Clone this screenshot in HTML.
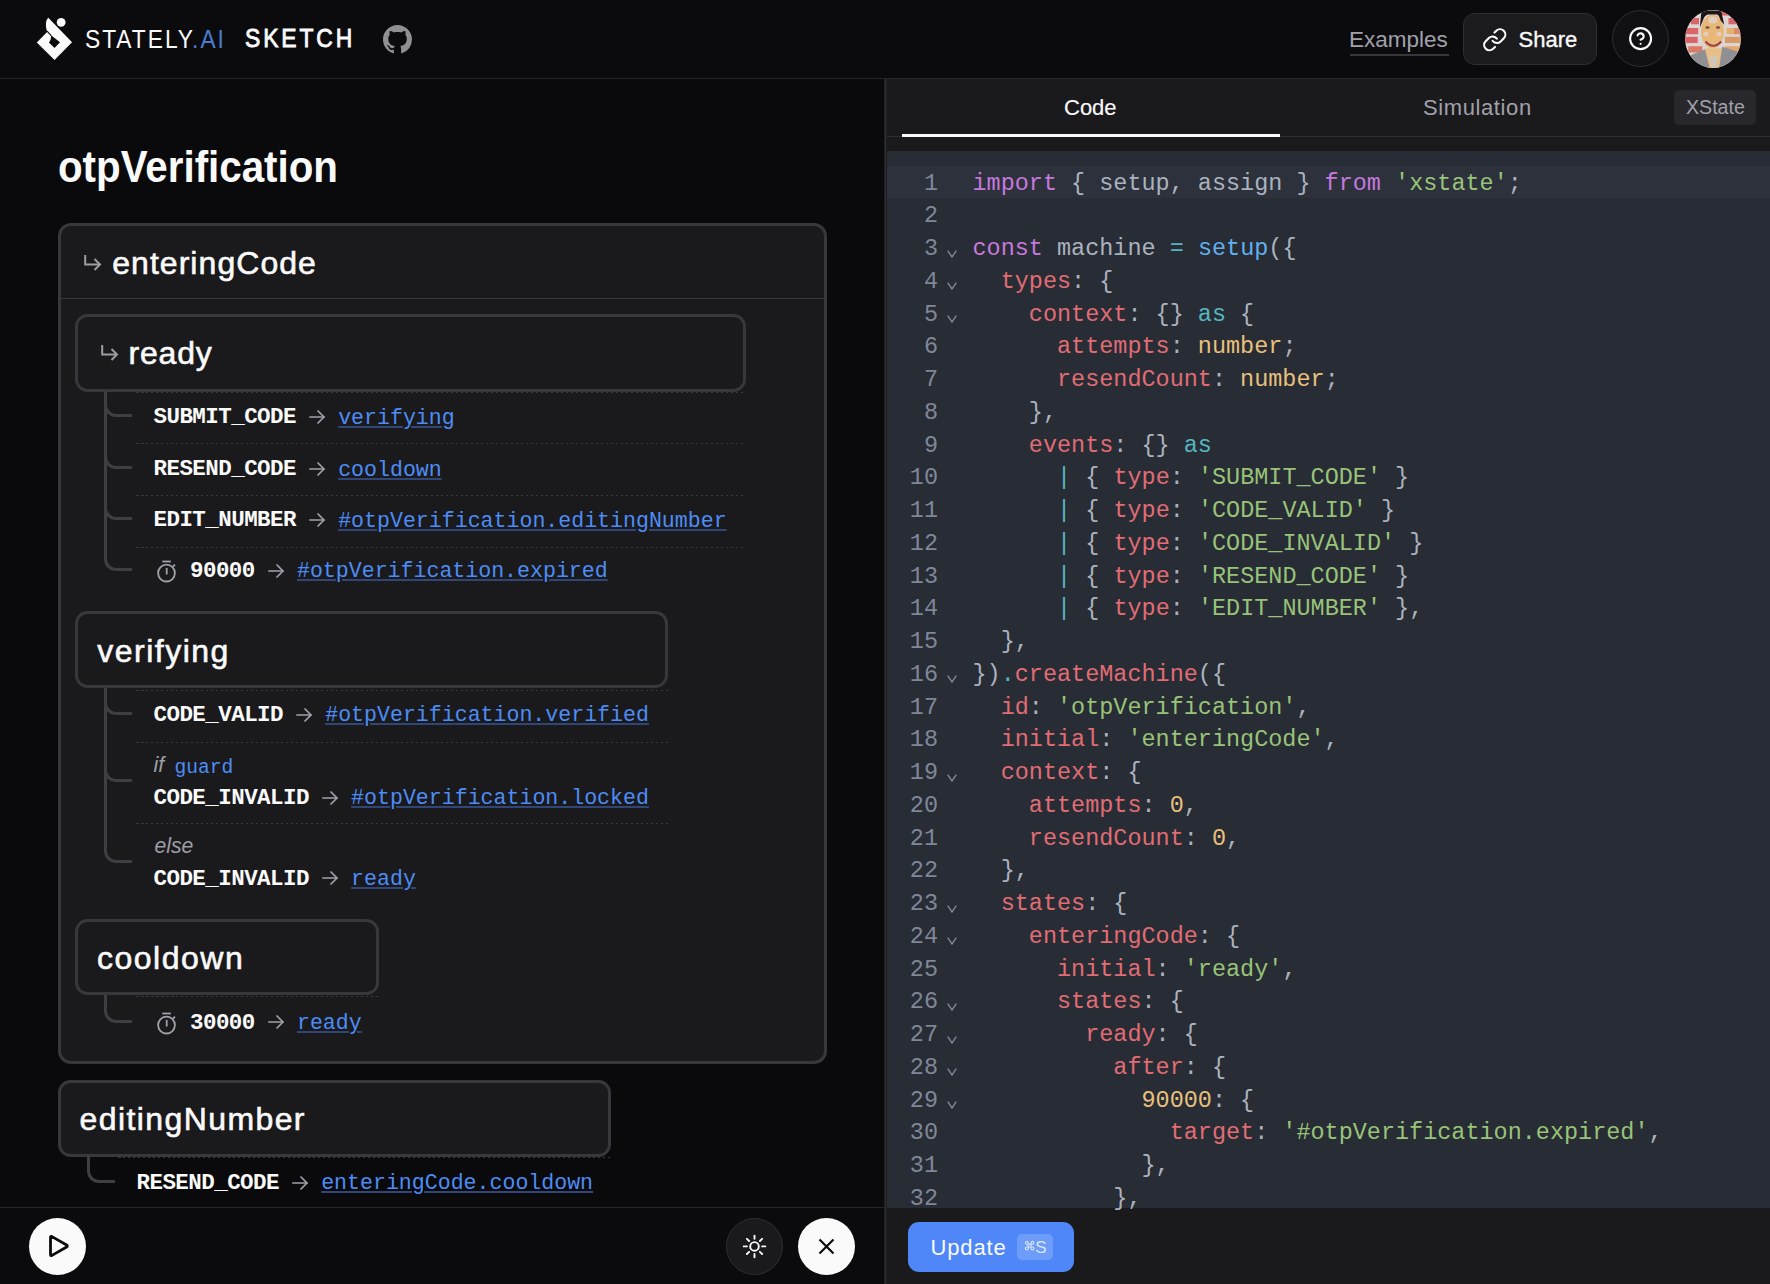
<!DOCTYPE html>
<html><head><meta charset="utf-8">
<style>
*{box-sizing:border-box;margin:0;padding:0}
html,body{width:1770px;height:1284px;overflow:hidden;background:#0b0b0d;font-family:"Liberation Sans",sans-serif;color:#fafafa}
.abs{position:absolute}
.sans{font-family:"Liberation Sans",sans-serif;white-space:nowrap}
.mono{font-family:"Liberation Mono",monospace;white-space:nowrap}
#header{position:absolute;left:0;top:0;width:1770px;height:79px;background:#0b0b0d;border-bottom:1px solid #26262a}
#left{position:absolute;left:0;top:79px;width:884px;height:1129px;background:#0a0a0c;overflow:hidden}
#bottombar{position:absolute;left:0;top:1207px;width:884px;height:77px;background:#0b0b0d;border-top:1px solid #26262a}
#divider{position:absolute;left:884px;top:79px;width:3px;height:1205px;background:#1f1f22}
#divider::after{content:"";position:absolute;left:1px;top:0;width:1px;height:100%;background:#2e2e32}
#right{position:absolute;left:887px;top:79px;width:883px;height:1205px;background:#1a1a1d}
/* code */
#code{position:absolute;left:887px;top:151px;width:883px;height:1057px;background:#282c34;overflow:hidden}
.ln{position:absolute;left:888px;width:50px;text-align:right;font-family:"Liberation Mono",monospace;font-size:23.47px;line-height:32.75px;color:#7f8798}
.cl{position:absolute;left:972.5px;white-space:pre;font-family:"Liberation Mono",monospace;font-size:23.47px;line-height:32.75px;color:#abb2bf}
.fold{position:absolute;left:947px;width:10px;height:8px}
.k{color:#c678dd}.f{color:#61afef}.o{color:#56b6c2}.r{color:#e06c75}.y{color:#e9c07d}.s{color:#98c379}.n{color:#e9c07d}
</style></head><body>
<div id="header">
<svg class="abs" style="left:0;top:0" width="100" height="78" viewBox="0 0 100 78">
<path fill="#fafafa" fill-rule="evenodd" d="M48.3 17.84 L72.06 42.37 L54.53 59.9 L36.81 42.57 L47.33 31.67 C46.36 29.52 45.77 26.8 45.97 23.68 C46.04 20.96 46.74 19.4 48.3 17.84 Z M51.03 35.36 L59.98 42.37 L54.53 48.02 L48.89 42.57 C50.25 41.01 51.22 39.26 51.03 35.36 Z"/><path d="M47 31.2 L51.2 35.6" stroke="#0b0b0d" stroke-width="1.1"/>
<circle cx="61.15" cy="22.3" r="4.4" fill="#fafafa"/>
</svg>
<div class="abs" id="brand" style="left:85px;top:24px;font-size:25.3px;letter-spacing:2.2px;transform:scaleX(0.9);transform-origin:0 0;color:#fafafa;white-space:nowrap;line-height:30px">STATELY<span style="color:#4a7bd3">.AI</span></div>
<div class="abs" id="sketch" style="left:245px;top:22px;font-size:26.6px;-webkit-text-stroke:0.9px #fafafa;letter-spacing:3.35px;transform:scaleX(0.86);transform-origin:0 0;color:#fafafa;white-space:nowrap;line-height:32px">SKETCH</div>
<svg class="abs" style="left:383px;top:24.5px" width="29" height="29" viewBox="0 0 16 16"><path fill="#8e8e93" d="M8 0C3.58 0 0 3.58 0 8c0 3.54 2.29 6.53 5.47 7.59.4.07.55-.17.55-.38 0-.19-.01-.82-.01-1.49-2.01.37-2.53-.49-2.69-.94-.09-.23-.48-.94-.82-1.13-.28-.15-.68-.52-.01-.53.63-.01 1.08.58 1.23.82.72 1.21 1.87.87 2.33.66.07-.52.28-.87.51-1.07-1.78-.2-3.64-.89-3.64-3.95 0-.87.31-1.59.82-2.15-.08-.2-.36-1.02.08-2.12 0 0 .67-.21 2.2.82.64-.18 1.32-.27 2-.27.68 0 1.36.09 2 .27 1.53-1.04 2.2-.82 2.2-.82.44 1.1.16 1.92.08 2.12.51.56.82 1.27.82 2.15 0 3.07-1.87 3.75-3.65 3.95.29.25.54.73.54 1.48 0 1.07-.01 1.93-.01 2.2 0 .21.15.46.55.38A8.013 8.013 0 0016 8c0-4.42-3.58-8-8-8z"/></svg>
<div class="abs" id="examples" style="left:1349px;top:27.3px;font-size:22.5px;color:#a1a1aa;white-space:nowrap;line-height:26px">Examples</div>
<div class="abs" style="left:1349.5px;top:54px;width:99px;height:2px;background:#36363b"></div>
<div class="abs" style="left:1463px;top:13px;width:134px;height:52px;border:1px solid #2e2e33;border-radius:12px;background:#1b1b1e"></div>
<svg class="abs" style="left:1482px;top:26.5px" width="25.5" height="25.5" viewBox="0 0 24 24" fill="none" stroke="#fafafa" stroke-width="2" stroke-linecap="round" stroke-linejoin="round"><path d="M10 13a5 5 0 0 0 7.54.54l3-3a5 5 0 0 0-7.07-7.07l-1.72 1.71"/><path d="M14 11a5 5 0 0 0-7.54-.54l-3 3a5 5 0 0 0 7.07 7.07l1.71-1.71"/></svg>
<div class="abs" id="share" style="left:1518.5px;top:27.3px;font-size:22px;-webkit-text-stroke:0.35px #fafafa;color:#fafafa;white-space:nowrap;line-height:26px">Share</div>
<div class="abs" style="left:1612px;top:10px;width:57px;height:57px;border:1px solid #2e2e33;border-radius:50%;background:#111114"></div>
<svg class="abs" style="left:1627.6px;top:26.4px" width="25.2" height="25.2" viewBox="0 0 24 24" fill="none" stroke="#fafafa" stroke-width="2" stroke-linecap="round" stroke-linejoin="round"><circle cx="12" cy="12" r="10"/><path d="M9.09 9a3 3 0 0 1 5.83 1c0 2-3 3-3 3"/><path d="M12 17h.01"/></svg>
<svg class="abs" style="left:1684.5px;top:10px" width="56" height="58" viewBox="0 0 56 58"><defs><clipPath id="avc"><ellipse cx="28" cy="29" rx="27.9" ry="29"/></clipPath></defs><g clip-path="url(#avc)">
<rect width="56" height="58" fill="#ddd5d2"/>
<rect x="36" y="0" width="12" height="5.5" fill="#d9646a"/>
<rect x="6" y="8" width="8" height="6.3" fill="#d9646a"/><rect x="43.5" y="8" width="9" height="6.3" fill="#d9646a"/>
<rect x="0" y="18" width="13.2" height="6.2" fill="#d9646a"/><rect x="41.4" y="18" width="14.6" height="6.2" fill="#e3b06e"/><rect x="49" y="18" width="7" height="6.2" fill="#d98a6a"/>
<rect x="0" y="26.8" width="12.7" height="6.2" fill="#d9646a"/><rect x="39.8" y="26.8" width="16.2" height="6.2" fill="#d99a6a"/>
<rect x="3.3" y="36.2" width="14.1" height="6.3" fill="#dc7a6a"/><rect x="39.8" y="36.2" width="16.2" height="6.3" fill="#e3a86e"/>
<ellipse cx="27.5" cy="21.5" rx="11.5" ry="16.8" fill="#e8b878"/>
<ellipse cx="27.8" cy="10" rx="4.5" ry="3.5" fill="#e2cdbf"/>
<ellipse cx="22.5" cy="17.5" rx="2.2" ry="1.2" fill="#7a4a52"/><ellipse cx="33" cy="17.5" rx="2.2" ry="1.2" fill="#7a4a52"/><ellipse cx="21" cy="24" rx="2.6" ry="2.2" fill="#e2cdbf"/><ellipse cx="34" cy="24" rx="2.6" ry="2.2" fill="#e2cdbf"/>
<path d="M14.8 17.4 L16.4 1.8 Q26 -0.5 36.2 1.3 L39.3 14.8 L35.7 10.6 Q34 5 32 4.4 L22.6 4.4 Q19 6 17.9 10.6 Z" fill="#1d1618"/>
<path d="M20.5 31.5 Q28.4 40 36.2 31.5" stroke="#9e3f48" stroke-width="2" fill="none"/>
<path d="M20 38.3 L37.2 38.3 L35.1 58.1 L22.6 58.1 Z" fill="#e6be86"/>
<path d="M5.9 45 L20 39.3 L24.7 58.1 L0 58.1 Z" fill="#8f8f94"/>
<path d="M37.2 36.7 L53.9 42 L56 58.1 L34.1 58.1 Z" fill="#8f8f94"/>
<path d="M24 46 L27 58 L31 58 L33 46 Z" fill="#c9c9cf" opacity="0.7"/>
</g></svg>
</div>
<div id="left"></div>
<div class="abs" style="left:58px;top:223px;width:769px;height:841px;border:3px solid #38383c;border-radius:13px;background:#1a1a1d"></div>
<div class="abs" style="left:61px;top:298px;width:763px;height:1px;background:#38383c"></div>
<svg class="abs" style="left:84px;top:255px" width="18" height="16" viewBox="0 0 18 16" fill="none" stroke="#9d9da4" stroke-width="2"><path d="M1.2 0 V9.5 H16"/><path d="M10.5 4 L16 9.5 L10.5 15"/></svg>
<div class="abs sans" style="left:112.2px;top:242.71px;font-size:32px;line-height:40.0px;letter-spacing:1.05px;color:#fafafa;-webkit-text-stroke:0.6px #fafafa;">enteringCode</div>
<div class="abs" style="left:75px;top:314px;width:671px;height:78px;border:3px solid #38383c;border-radius:12.5px;background:#1a1a1d"></div>
<svg class="abs" style="left:101px;top:345px" width="18" height="16" viewBox="0 0 18 16" fill="none" stroke="#9d9da4" stroke-width="2"><path d="M1.2 0 V9.5 H16"/><path d="M10.5 4 L16 9.5 L10.5 15"/></svg>
<div class="abs sans" style="left:128.5px;top:332.91px;font-size:32px;line-height:40.0px;letter-spacing:0.8px;color:#fafafa;-webkit-text-stroke:0.6px #fafafa;">ready</div>
<div class="abs" style="left:136px;top:392px;width:610px;height:1px;background-image:repeating-linear-gradient(90deg,#3a3a3e 0 2.5px,transparent 2.5px 5px)"></div>
<div class="abs" style="left:136px;top:443.2px;width:610px;height:1px;background-image:repeating-linear-gradient(90deg,#3a3a3e 0 2.5px,transparent 2.5px 5px)"></div>
<div class="abs" style="left:136px;top:494.6px;width:610px;height:1px;background-image:repeating-linear-gradient(90deg,#3a3a3e 0 2.5px,transparent 2.5px 5px)"></div>
<div class="abs" style="left:136px;top:546.6px;width:610px;height:1px;background-image:repeating-linear-gradient(90deg,#3a3a3e 0 2.5px,transparent 2.5px 5px)"></div>
<div class="abs" style="left:103.5px;top:392px;width:3px;height:148px;background:#3e3e43"></div>
<div class="abs" style="left:103.5px;top:390.5px;width:28.5px;height:26.5px;border-left:3px solid #3e3e43;border-bottom:3px solid #3e3e43;border-bottom-left-radius:12px"></div>
<div class="abs mono" style="left:153.5px;top:402.30px;font-size:22.5px;line-height:30px;color:#fafafa;font-weight:bold;letter-spacing:-0.552px;">SUBMIT_CODE</div>
<svg class="abs" style="left:309.35px;top:409.8px" width="16" height="14" viewBox="0 0 16 14" fill="none" stroke="#a1a1aa" stroke-width="1.7" stroke-linecap="round" stroke-linejoin="round"><path d="M0.9 7 H15"/><path d="M9 1 L15 7 L9 13"/></svg>
<div class="abs mono" style="left:338.15000000000003px;top:402.55px;font-size:21.58px;line-height:30px;color:#4d8cf5;text-decoration:underline;text-decoration-color:#2f4677;text-underline-offset:2px;text-decoration-thickness:2px;">verifying</div>
<div class="abs" style="left:103.5px;top:442.5px;width:28.5px;height:26.5px;border-left:3px solid #3e3e43;border-bottom:3px solid #3e3e43;border-bottom-left-radius:12px"></div>
<div class="abs mono" style="left:153.5px;top:454.30px;font-size:22.5px;line-height:30px;color:#fafafa;font-weight:bold;letter-spacing:-0.552px;">RESEND_CODE</div>
<svg class="abs" style="left:309.35px;top:461.8px" width="16" height="14" viewBox="0 0 16 14" fill="none" stroke="#a1a1aa" stroke-width="1.7" stroke-linecap="round" stroke-linejoin="round"><path d="M0.9 7 H15"/><path d="M9 1 L15 7 L9 13"/></svg>
<div class="abs mono" style="left:338.15000000000003px;top:454.55px;font-size:21.58px;line-height:30px;color:#4d8cf5;text-decoration:underline;text-decoration-color:#2f4677;text-underline-offset:2px;text-decoration-thickness:2px;">cooldown</div>
<div class="abs" style="left:103.5px;top:493.5px;width:28.5px;height:26.5px;border-left:3px solid #3e3e43;border-bottom:3px solid #3e3e43;border-bottom-left-radius:12px"></div>
<div class="abs mono" style="left:153.5px;top:505.30px;font-size:22.5px;line-height:30px;color:#fafafa;font-weight:bold;letter-spacing:-0.552px;">EDIT_NUMBER</div>
<svg class="abs" style="left:309.35px;top:512.8px" width="16" height="14" viewBox="0 0 16 14" fill="none" stroke="#a1a1aa" stroke-width="1.7" stroke-linecap="round" stroke-linejoin="round"><path d="M0.9 7 H15"/><path d="M9 1 L15 7 L9 13"/></svg>
<div class="abs mono" style="left:338.15000000000003px;top:505.55px;font-size:21.58px;line-height:30px;color:#4d8cf5;text-decoration:underline;text-decoration-color:#2f4677;text-underline-offset:2px;text-decoration-thickness:2px;">#otpVerification.editingNumber</div>
<div class="abs" style="left:103.5px;top:540px;width:28.5px;height:30.799999999999955px;border-left:3px solid #3e3e43;border-bottom:3px solid #3e3e43;border-bottom-left-radius:12px"></div>
<svg class="abs" style="left:157px;top:560.0px" width="20" height="23" viewBox="157 559.5 20 23" fill="none" stroke="#a1a1aa" stroke-width="1.8" stroke-linecap="butt"><path d="M162.3 561 H170.9"/><circle cx="166.5" cy="572.6" r="8.4"/><path d="M166.7 567.4 V574"/><path d="M173 566 L175 564.3"/></svg>
<div class="abs mono" style="left:190px;top:556.10px;font-size:22.5px;line-height:30px;color:#fafafa;font-weight:bold;letter-spacing:-0.552px;">90000</div>
<svg class="abs" style="left:268.15px;top:563.5999999999999px" width="16" height="14" viewBox="0 0 16 14" fill="none" stroke="#a1a1aa" stroke-width="1.7" stroke-linecap="round" stroke-linejoin="round"><path d="M0.9 7 H15"/><path d="M9 1 L15 7 L9 13"/></svg>
<div class="abs mono" style="left:296.95px;top:556.35px;font-size:21.58px;line-height:30px;color:#4d8cf5;text-decoration:underline;text-decoration-color:#2f4677;text-underline-offset:2px;text-decoration-thickness:2px;">#otpVerification.expired</div>
<div class="abs" style="left:75px;top:611px;width:592.5px;height:77px;border:3px solid #38383c;border-radius:12.5px;background:#1a1a1d"></div>
<div class="abs sans" style="left:97.2px;top:630.71px;font-size:32px;line-height:40.0px;letter-spacing:1.5px;color:#fafafa;-webkit-text-stroke:0.6px #fafafa;">verifying</div>
<div class="abs" style="left:136px;top:689.7px;width:531.5px;height:1px;background-image:repeating-linear-gradient(90deg,#3a3a3e 0 2.5px,transparent 2.5px 5px)"></div>
<div class="abs" style="left:136px;top:741.6px;width:531.5px;height:1px;background-image:repeating-linear-gradient(90deg,#3a3a3e 0 2.5px,transparent 2.5px 5px)"></div>
<div class="abs" style="left:136px;top:822.7px;width:531.5px;height:1px;background-image:repeating-linear-gradient(90deg,#3a3a3e 0 2.5px,transparent 2.5px 5px)"></div>
<div class="abs" style="left:103.5px;top:688px;width:3px;height:152px;background:#3e3e43"></div>
<div class="abs" style="left:103.5px;top:690px;width:28.5px;height:24.700000000000045px;border-left:3px solid #3e3e43;border-bottom:3px solid #3e3e43;border-bottom-left-radius:12px"></div>
<div class="abs mono" style="left:153.5px;top:700.00px;font-size:22.5px;line-height:30px;color:#fafafa;font-weight:bold;letter-spacing:-0.552px;">CODE_VALID</div>
<svg class="abs" style="left:296.4px;top:707.5px" width="16" height="14" viewBox="0 0 16 14" fill="none" stroke="#a1a1aa" stroke-width="1.7" stroke-linecap="round" stroke-linejoin="round"><path d="M0.9 7 H15"/><path d="M9 1 L15 7 L9 13"/></svg>
<div class="abs mono" style="left:325.2px;top:700.25px;font-size:21.58px;line-height:30px;color:#4d8cf5;text-decoration:underline;text-decoration-color:#2f4677;text-underline-offset:2px;text-decoration-thickness:2px;">#otpVerification.verified</div>
<div class="abs" style="left:103.5px;top:745px;width:28.5px;height:37.0px;border-left:3px solid #3e3e43;border-bottom:3px solid #3e3e43;border-bottom-left-radius:12px"></div>
<div class="abs sans" style="left:153.5px;top:752.01px;font-size:21.5px;line-height:26.875px;letter-spacing:0px;color:#9d9da4;font-style:italic;">if</div>
<div class="abs mono" style="left:174.5px;top:752.67px;font-size:19.6px;line-height:30px;color:#4d8cf5;">guard</div>
<div class="abs mono" style="left:153.5px;top:783.00px;font-size:22.5px;line-height:30px;color:#fafafa;font-weight:bold;letter-spacing:-0.552px;">CODE_INVALID</div>
<svg class="abs" style="left:322.29999999999995px;top:790.5px" width="16" height="14" viewBox="0 0 16 14" fill="none" stroke="#a1a1aa" stroke-width="1.7" stroke-linecap="round" stroke-linejoin="round"><path d="M0.9 7 H15"/><path d="M9 1 L15 7 L9 13"/></svg>
<div class="abs mono" style="left:351.09999999999997px;top:783.25px;font-size:21.58px;line-height:30px;color:#4d8cf5;text-decoration:underline;text-decoration-color:#2f4677;text-underline-offset:2px;text-decoration-thickness:2px;">#otpVerification.locked</div>
<div class="abs" style="left:103.5px;top:825px;width:28.5px;height:37.799999999999955px;border-left:3px solid #3e3e43;border-bottom:3px solid #3e3e43;border-bottom-left-radius:12px"></div>
<div class="abs sans" style="left:154.5px;top:833.10px;font-size:21.2px;line-height:26.5px;letter-spacing:0px;color:#9d9da4;font-style:italic;">else</div>
<div class="abs mono" style="left:153.5px;top:863.80px;font-size:22.5px;line-height:30px;color:#fafafa;font-weight:bold;letter-spacing:-0.552px;">CODE_INVALID</div>
<svg class="abs" style="left:322.29999999999995px;top:871.3px" width="16" height="14" viewBox="0 0 16 14" fill="none" stroke="#a1a1aa" stroke-width="1.7" stroke-linecap="round" stroke-linejoin="round"><path d="M0.9 7 H15"/><path d="M9 1 L15 7 L9 13"/></svg>
<div class="abs mono" style="left:351.09999999999997px;top:864.05px;font-size:21.58px;line-height:30px;color:#4d8cf5;text-decoration:underline;text-decoration-color:#2f4677;text-underline-offset:2px;text-decoration-thickness:2px;">ready</div>
<div class="abs" style="left:75px;top:919px;width:303.5px;height:76px;border:3px solid #38383c;border-radius:12.5px;background:#1a1a1d"></div>
<div class="abs sans" style="left:97px;top:937.91px;font-size:32px;line-height:40.0px;letter-spacing:1.5px;color:#fafafa;-webkit-text-stroke:0.6px #fafafa;">cooldown</div>
<div class="abs" style="left:136px;top:996.3px;width:242.5px;height:1px;background-image:repeating-linear-gradient(90deg,#3a3a3e 0 2.5px,transparent 2.5px 5px)"></div>
<div class="abs" style="left:103.5px;top:995px;width:28.5px;height:27.5px;border-left:3px solid #3e3e43;border-bottom:3px solid #3e3e43;border-bottom-left-radius:12px"></div>
<svg class="abs" style="left:157px;top:1011.7px" width="20" height="23" viewBox="157 559.5 20 23" fill="none" stroke="#a1a1aa" stroke-width="1.8" stroke-linecap="butt"><path d="M162.3 561 H170.9"/><circle cx="166.5" cy="572.6" r="8.4"/><path d="M166.7 567.4 V574"/><path d="M173 566 L175 564.3"/></svg>
<div class="abs mono" style="left:190px;top:1007.80px;font-size:22.5px;line-height:30px;color:#fafafa;font-weight:bold;letter-spacing:-0.552px;">30000</div>
<svg class="abs" style="left:268.15px;top:1015.3px" width="16" height="14" viewBox="0 0 16 14" fill="none" stroke="#a1a1aa" stroke-width="1.7" stroke-linecap="round" stroke-linejoin="round"><path d="M0.9 7 H15"/><path d="M9 1 L15 7 L9 13"/></svg>
<div class="abs mono" style="left:296.95px;top:1008.05px;font-size:21.58px;line-height:30px;color:#4d8cf5;text-decoration:underline;text-decoration-color:#2f4677;text-underline-offset:2px;text-decoration-thickness:2px;">ready</div>
<div class="abs" style="left:58px;top:1079.5px;width:552.5px;height:77.0px;border:3px solid #38383c;border-radius:12.5px;background:#1a1a1d"></div>
<div class="abs sans" style="left:79.6px;top:1098.51px;font-size:32px;line-height:40.0px;letter-spacing:1.4px;color:#fafafa;-webkit-text-stroke:0.6px #fafafa;">editingNumber</div>
<div class="abs" style="left:118px;top:1157px;width:492.5px;height:1px;background-image:repeating-linear-gradient(90deg,#3a3a3e 0 2.5px,transparent 2.5px 5px)"></div>
<div class="abs" style="left:86.5px;top:1156px;width:28.5px;height:26.90000000000009px;border-left:3px solid #3e3e43;border-bottom:3px solid #3e3e43;border-bottom-left-radius:12px"></div>
<div class="abs mono" style="left:136.5px;top:1168.20px;font-size:22.5px;line-height:30px;color:#fafafa;font-weight:bold;letter-spacing:-0.552px;">RESEND_CODE</div>
<svg class="abs" style="left:292.35px;top:1175.7px" width="16" height="14" viewBox="0 0 16 14" fill="none" stroke="#a1a1aa" stroke-width="1.7" stroke-linecap="round" stroke-linejoin="round"><path d="M0.9 7 H15"/><path d="M9 1 L15 7 L9 13"/></svg>
<div class="abs mono" style="left:321.15000000000003px;top:1168.45px;font-size:21.58px;line-height:30px;color:#4d8cf5;text-decoration:underline;text-decoration-color:#2f4677;text-underline-offset:2px;text-decoration-thickness:2px;">enteringCode.cooldown</div>
<div id="bottombar"></div>
<div id="divider"></div>
<div id="right"></div>
<div id="code"><div class="abs" style="left:0;top:15px;width:883px;height:32px;background:#2c313c"></div></div>
<div class="ln" style="top:167.60px">1</div>
<div class="cl" style="top:167.60px"><span class="k">import</span> { setup, assign } <span class="k">from</span> <span class="s">&#x27;xstate&#x27;</span>;</div>
<div class="ln" style="top:200.35px">2</div>
<div class="cl" style="top:200.35px"></div>
<div class="ln" style="top:233.10px">3</div>
<svg class="fold" style="top:249.50px" viewBox="0 0 10 8"><path d="M0.7 0.7 L5 7 L9.3 0.7" stroke="#7f8798" stroke-width="1.4" fill="none"/></svg>
<div class="cl" style="top:233.10px"><span class="k">const</span> machine <span class="o">=</span> <span class="f">setup</span>({</div>
<div class="ln" style="top:265.85px">4</div>
<svg class="fold" style="top:282.25px" viewBox="0 0 10 8"><path d="M0.7 0.7 L5 7 L9.3 0.7" stroke="#7f8798" stroke-width="1.4" fill="none"/></svg>
<div class="cl" style="top:265.85px">  <span class="r">types</span>: {</div>
<div class="ln" style="top:298.60px">5</div>
<svg class="fold" style="top:315.00px" viewBox="0 0 10 8"><path d="M0.7 0.7 L5 7 L9.3 0.7" stroke="#7f8798" stroke-width="1.4" fill="none"/></svg>
<div class="cl" style="top:298.60px">    <span class="r">context</span>: {} <span class="o">as</span> {</div>
<div class="ln" style="top:331.35px">6</div>
<div class="cl" style="top:331.35px">      <span class="r">attempts</span>: <span class="y">number</span>;</div>
<div class="ln" style="top:364.10px">7</div>
<div class="cl" style="top:364.10px">      <span class="r">resendCount</span>: <span class="y">number</span>;</div>
<div class="ln" style="top:396.85px">8</div>
<div class="cl" style="top:396.85px">    },</div>
<div class="ln" style="top:429.60px">9</div>
<div class="cl" style="top:429.60px">    <span class="r">events</span>: {} <span class="o">as</span></div>
<div class="ln" style="top:462.35px">10</div>
<div class="cl" style="top:462.35px">      <span class="o">|</span> { <span class="r">type</span>: <span class="s">&#x27;SUBMIT_CODE&#x27;</span> }</div>
<div class="ln" style="top:495.10px">11</div>
<div class="cl" style="top:495.10px">      <span class="o">|</span> { <span class="r">type</span>: <span class="s">&#x27;CODE_VALID&#x27;</span> }</div>
<div class="ln" style="top:527.85px">12</div>
<div class="cl" style="top:527.85px">      <span class="o">|</span> { <span class="r">type</span>: <span class="s">&#x27;CODE_INVALID&#x27;</span> }</div>
<div class="ln" style="top:560.60px">13</div>
<div class="cl" style="top:560.60px">      <span class="o">|</span> { <span class="r">type</span>: <span class="s">&#x27;RESEND_CODE&#x27;</span> }</div>
<div class="ln" style="top:593.35px">14</div>
<div class="cl" style="top:593.35px">      <span class="o">|</span> { <span class="r">type</span>: <span class="s">&#x27;EDIT_NUMBER&#x27;</span> },</div>
<div class="ln" style="top:626.10px">15</div>
<div class="cl" style="top:626.10px">  },</div>
<div class="ln" style="top:658.85px">16</div>
<svg class="fold" style="top:675.25px" viewBox="0 0 10 8"><path d="M0.7 0.7 L5 7 L9.3 0.7" stroke="#7f8798" stroke-width="1.4" fill="none"/></svg>
<div class="cl" style="top:658.85px">})<span class="o">.</span><span class="r">createMachine</span>({</div>
<div class="ln" style="top:691.60px">17</div>
<div class="cl" style="top:691.60px">  <span class="r">id</span>: <span class="s">&#x27;otpVerification&#x27;</span>,</div>
<div class="ln" style="top:724.35px">18</div>
<div class="cl" style="top:724.35px">  <span class="r">initial</span>: <span class="s">&#x27;enteringCode&#x27;</span>,</div>
<div class="ln" style="top:757.10px">19</div>
<svg class="fold" style="top:773.50px" viewBox="0 0 10 8"><path d="M0.7 0.7 L5 7 L9.3 0.7" stroke="#7f8798" stroke-width="1.4" fill="none"/></svg>
<div class="cl" style="top:757.10px">  <span class="r">context</span>: {</div>
<div class="ln" style="top:789.85px">20</div>
<div class="cl" style="top:789.85px">    <span class="r">attempts</span>: <span class="n">0</span>,</div>
<div class="ln" style="top:822.60px">21</div>
<div class="cl" style="top:822.60px">    <span class="r">resendCount</span>: <span class="n">0</span>,</div>
<div class="ln" style="top:855.35px">22</div>
<div class="cl" style="top:855.35px">  },</div>
<div class="ln" style="top:888.10px">23</div>
<svg class="fold" style="top:904.50px" viewBox="0 0 10 8"><path d="M0.7 0.7 L5 7 L9.3 0.7" stroke="#7f8798" stroke-width="1.4" fill="none"/></svg>
<div class="cl" style="top:888.10px">  <span class="r">states</span>: {</div>
<div class="ln" style="top:920.85px">24</div>
<svg class="fold" style="top:937.25px" viewBox="0 0 10 8"><path d="M0.7 0.7 L5 7 L9.3 0.7" stroke="#7f8798" stroke-width="1.4" fill="none"/></svg>
<div class="cl" style="top:920.85px">    <span class="r">enteringCode</span>: {</div>
<div class="ln" style="top:953.60px">25</div>
<div class="cl" style="top:953.60px">      <span class="r">initial</span>: <span class="s">&#x27;ready&#x27;</span>,</div>
<div class="ln" style="top:986.35px">26</div>
<svg class="fold" style="top:1002.75px" viewBox="0 0 10 8"><path d="M0.7 0.7 L5 7 L9.3 0.7" stroke="#7f8798" stroke-width="1.4" fill="none"/></svg>
<div class="cl" style="top:986.35px">      <span class="r">states</span>: {</div>
<div class="ln" style="top:1019.10px">27</div>
<svg class="fold" style="top:1035.50px" viewBox="0 0 10 8"><path d="M0.7 0.7 L5 7 L9.3 0.7" stroke="#7f8798" stroke-width="1.4" fill="none"/></svg>
<div class="cl" style="top:1019.10px">        <span class="r">ready</span>: {</div>
<div class="ln" style="top:1051.85px">28</div>
<svg class="fold" style="top:1068.25px" viewBox="0 0 10 8"><path d="M0.7 0.7 L5 7 L9.3 0.7" stroke="#7f8798" stroke-width="1.4" fill="none"/></svg>
<div class="cl" style="top:1051.85px">          <span class="r">after</span>: {</div>
<div class="ln" style="top:1084.60px">29</div>
<svg class="fold" style="top:1101.00px" viewBox="0 0 10 8"><path d="M0.7 0.7 L5 7 L9.3 0.7" stroke="#7f8798" stroke-width="1.4" fill="none"/></svg>
<div class="cl" style="top:1084.60px">            <span class="n">90000</span>: {</div>
<div class="ln" style="top:1117.35px">30</div>
<div class="cl" style="top:1117.35px">              <span class="r">target</span>: <span class="s">&#x27;#otpVerification.expired&#x27;</span>,</div>
<div class="ln" style="top:1150.10px">31</div>
<div class="cl" style="top:1150.10px">            },</div>
<div class="ln" style="top:1182.85px">32</div>
<div class="cl" style="top:1182.85px">          },</div>
<div class="abs sans" id="title" style="left:58px;top:138.6px;font-size:44.3px;line-height:56px;font-weight:bold;letter-spacing:0px;transform:scaleX(0.91);transform-origin:0 0;color:#fafafa">otpVerification</div>
<div class="abs" style="left:887px;top:136px;width:883px;height:1px;background:#2e2e32"></div>
<div class="abs" style="left:902px;top:134px;width:378px;height:3px;background:#fafafa"></div>
<div class="abs sans" style="left:1064px;top:94px;font-size:22px;line-height:28px;color:#fafafa;-webkit-text-stroke:0.15px #fafafa">Code</div>
<div class="abs sans" style="left:1423px;top:94px;font-size:22px;line-height:28px;letter-spacing:0.6px;color:#a1a1aa">Simulation</div>
<div class="abs" style="left:1674px;top:90px;width:82px;height:35px;border-radius:5px;background:#28282c"></div>
<div class="abs sans" style="left:1686px;top:95px;font-size:19.6px;line-height:24px;color:#a1a1aa">XState</div>
<!-- bottom bar left -->
<div class="abs" style="left:29px;top:1218px;width:57px;height:57px;border-radius:50%;background:#fafafa"></div>
<svg class="abs" style="left:47px;top:1234px" width="23" height="24" viewBox="0 0 23 24" fill="none" stroke="#0b0b0d" stroke-width="2.8" stroke-linejoin="round"><path d="M3.5 3.5 Q3.5 1.9 5 2.6 L19.6 11 Q21 12 19.6 13 L5 21.4 Q3.5 22.1 3.5 20.5 Z"/></svg>
<div class="abs" style="left:726px;top:1218px;width:57px;height:57px;border-radius:50%;background:#1a1a1d;border:1px solid #2e2e32"></div>
<svg class="abs" style="left:740px;top:1232px" width="29" height="29" viewBox="740 1232 29 29" fill="none" stroke="#fafafa" stroke-width="1.9" stroke-linecap="round"><circle cx="754.5" cy="1246.4" r="4.3"/><path d="M754.5 1235.6v3.2M754.5 1254v3.2M743.7 1246.4h3.2M762.1 1246.4h3.2M746.9 1238.8l2.2 2.2M759.9 1251.8l2.2 2.2M746.9 1254l2.2-2.2M759.9 1241l2.2-2.2"/></svg>
<div class="abs" style="left:798px;top:1218px;width:57px;height:57px;border-radius:50%;background:#fafafa"></div>
<svg class="abs" style="left:818px;top:1238px" width="17" height="17" viewBox="0 0 17 17" fill="none" stroke="#0b0b0d" stroke-width="2.2"><path d="M1.5 1.5 L15.5 15.5 M15.5 1.5 L1.5 15.5"/></svg>
<!-- update button -->
<div class="abs" style="left:908px;top:1222px;width:166px;height:50px;border-radius:11px;background:#4f87f8"></div>
<div class="abs sans" style="left:930.5px;top:1234px;font-size:22px;line-height:28px;letter-spacing:0.85px;color:#fafafa">Update</div>
<div class="abs" style="left:1017px;top:1234px;width:36px;height:26px;border-radius:5px;background:#6d9cf9"></div>
<svg class="abs" style="left:1023.6px;top:1240.2px" width="11.3" height="11.3" viewBox="0 0 24 24" fill="none" stroke="#dbe6fe" stroke-width="2.3" stroke-linecap="round" stroke-linejoin="round"><path d="M15 6v12a3 3 0 1 0 3-3H6a3 3 0 1 0 3 3V6a3 3 0 1 0-3 3h12a3 3 0 1 0-3-3"/></svg><div class="abs sans" style="left:1035.3px;top:1236.6px;font-size:17px;line-height:22px;color:#dbe6fe">S</div>

</body></html>
